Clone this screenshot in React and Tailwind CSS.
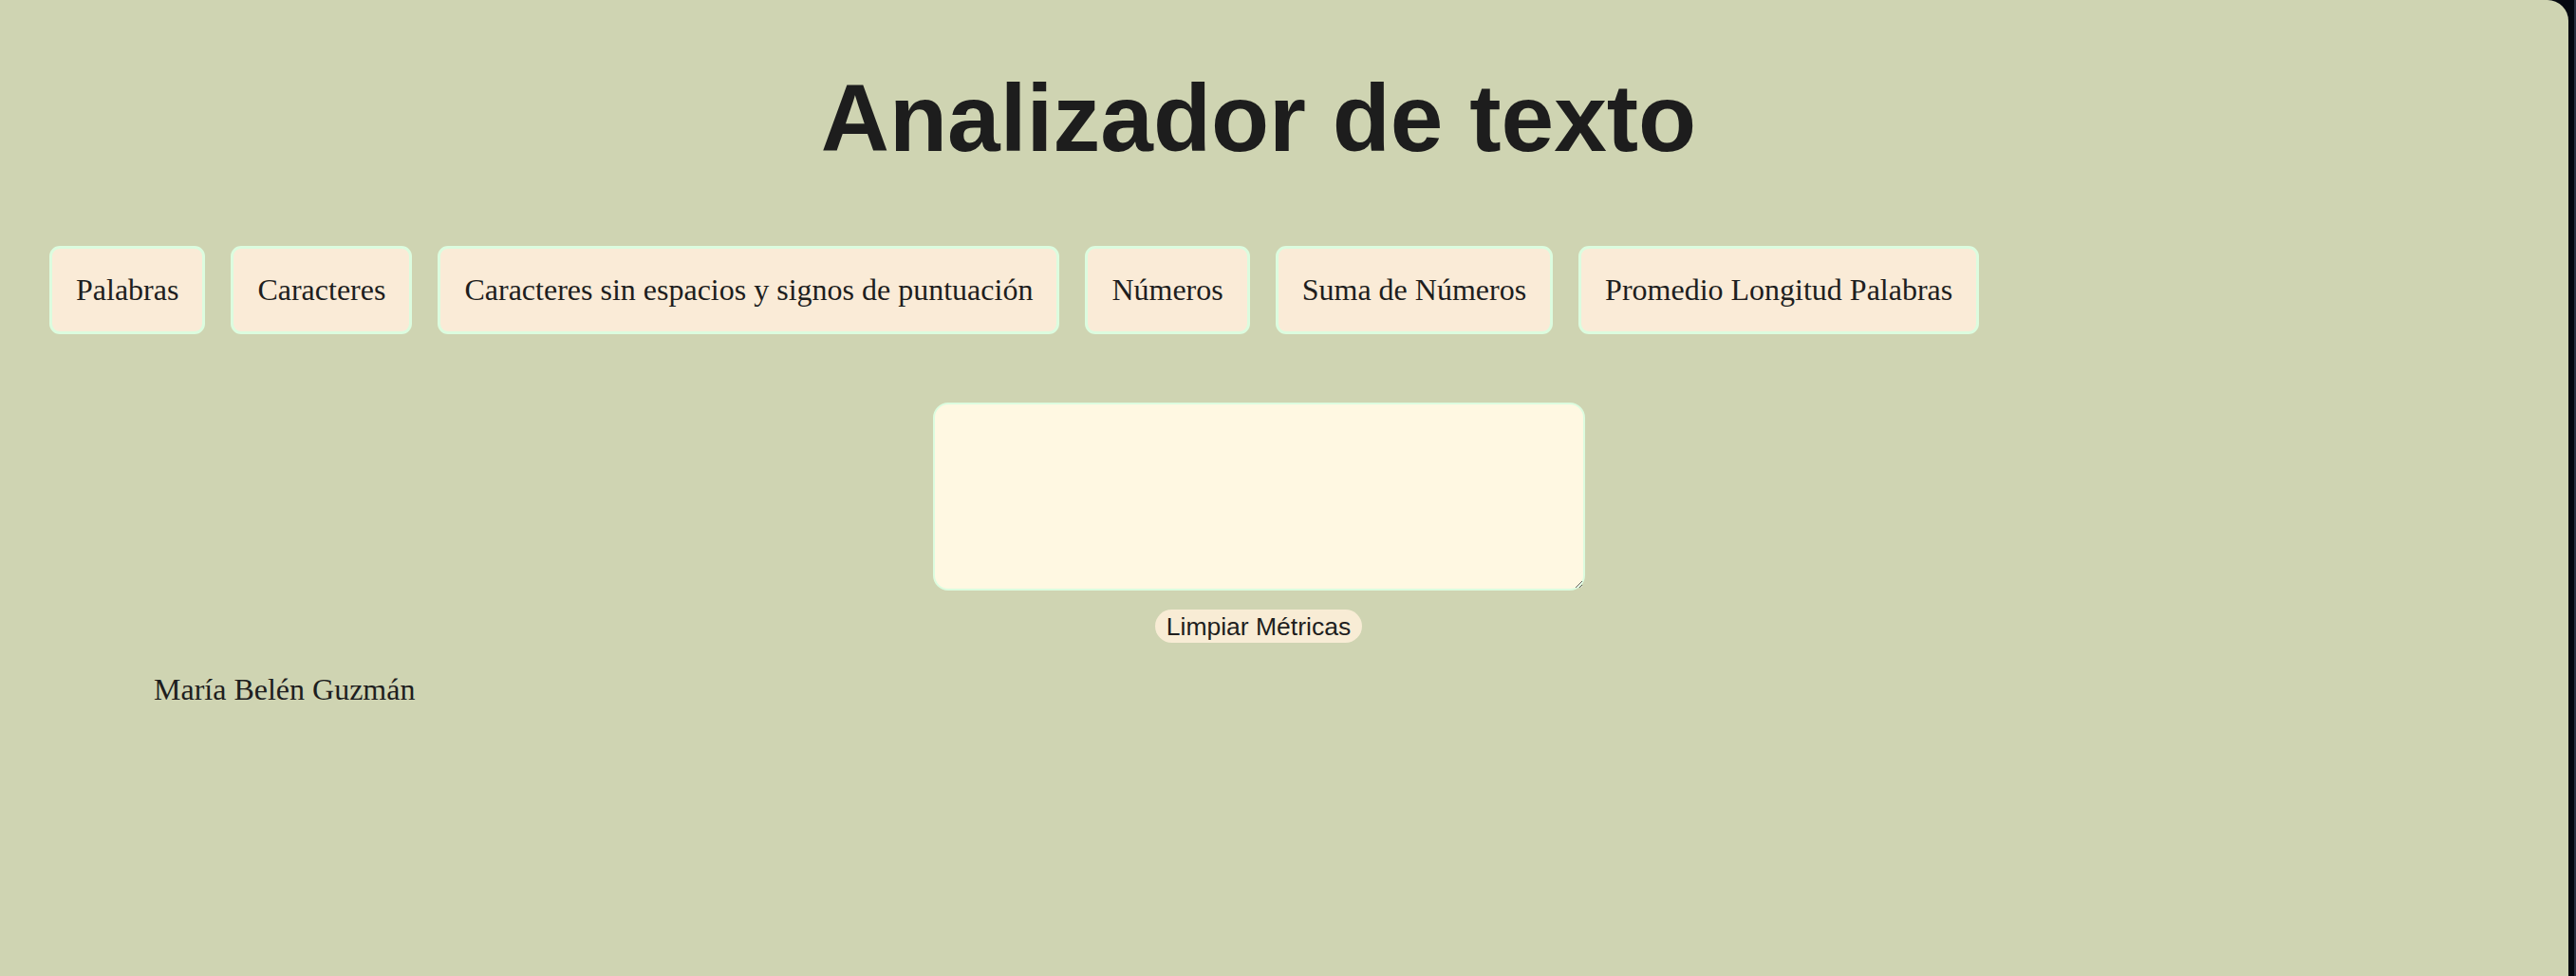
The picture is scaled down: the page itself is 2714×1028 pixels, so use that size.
import React, { useState } from 'react';

const metrics = [
  'Palabras',
  'Caracteres',
  'Caracteres sin espacios y signos de puntuación',
  'Números',
  'Suma de Números',
  'Promedio Longitud Palabras',
];

const App = () => {
  const [text, setText] = useState('');

  return (
    <div className="flex h-[1028px] w-full bg-[#05080f]">
      {/* Main page */}
      <main className="flex-1 flex flex-col bg-[#cfd4b2] rounded-tr-[22px] pr-[54px] text-[#1e1e1e]">
        <h1 className="mt-[67px] text-center text-[100px] leading-[115px] font-bold font-['Liberation_Sans',Arial,sans-serif] text-[#1d1d1d]">
          Analizador de texto
        </h1>

        {/* Metric buttons */}
        <ul className="mt-[77px] pl-[52px] flex flex-row gap-[27px]">
          {metrics.map((m) => (
            <li
              key={m}
              className="px-[25px] py-[25px] text-[32px] leading-[37px] font-['Liberation_Serif','Times_New_Roman',serif] bg-[#faebd7] border-[3px] border-[#dcfcdf] rounded-[11px] whitespace-nowrap"
            >
              {m}
            </li>
          ))}
        </ul>

        {/* Text input */}
        <div className="mt-[72px] flex flex-col items-center">
          <textarea
            value={text}
            onChange={(e) => setText(e.target.value)}
            className="w-[687px] h-[198px] bg-[#fff8e2] border-2 border-[#dcfcdf] rounded-[16px] outline-none p-2 text-[24px]"
          />
          <button
            onClick={() => setText('')}
            className="mt-[20px] h-[35px] px-[12px] rounded-full bg-[#f8ecd5] text-[26.5px] leading-[30px] font-['Liberation_Sans',Arial,sans-serif] text-[#1e1e1e]"
          >
            Limpiar Métricas
          </button>
        </div>

        <footer className="mt-[31px] ml-[162px] text-[32px] leading-[37px] font-['Liberation_Serif','Times_New_Roman',serif]">
          María Belén Guzmán
        </footer>
      </main>

      {/* Window edge */}
      <div className="w-[6px] bg-[#05080f]" />
      <div className="w-[2px] bg-[#2a3040]" />
    </div>
  );
};

export default App;
